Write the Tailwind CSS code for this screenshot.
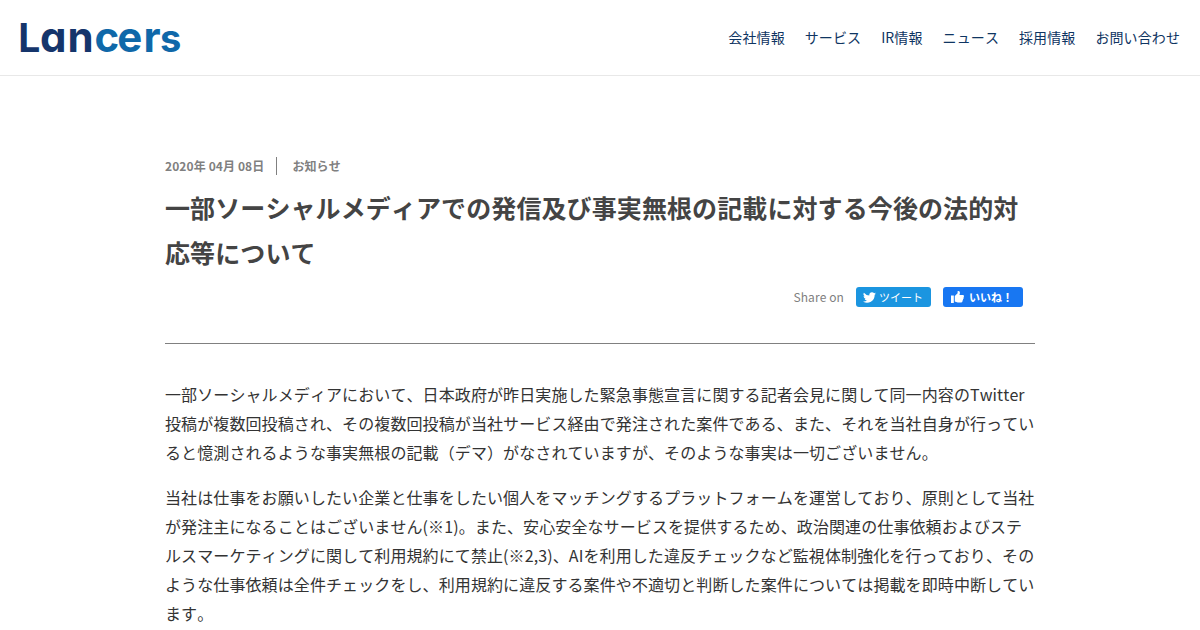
<!DOCTYPE html>
<html lang="ja">
<head>
  <meta charset="UTF-8">
  <title>ランサーズ株式会社</title>
  <meta name="viewport" content="width=device-width, initial-scale=1.0">
  <script src="https://cdn.jsdelivr.net/npm/@tailwindcss/browser@4"></script>
</head>
<body class="h-[630px] overflow-hidden bg-white font-['Noto_Sans_CJK_JP',sans-serif] tracking-[0.1px] text-[#333] [font-kerning:none]">

  <header class="flex h-[76px] items-center justify-between border-b border-[#e8e8e8] pr-5 pl-4">
    <a href="#" aria-label="Lancers">
      <svg class="block" width="172" height="74" viewBox="16 1 172 74">
        <text y="52" x="18.200 40 67.500 94.500 117.200 143.500 160" class="font-['Inter',sans-serif] text-[42px] font-bold tracking-normal [font-feature-settings:'cv11']"><tspan fill="#15356b"><tspan class="text-[39px]">L</tspan>an</tspan><tspan fill="#0f68a9">cer<tspan class="text-[38px]">s</tspan></tspan></text>
      </svg>
    </a>
    <nav class="flex gap-5 pb-0.5 text-sm text-[#0f3562]">
      <a href="#">会社情報</a>
      <a href="#">サービス</a>
      <a href="#">IR情報</a>
      <a href="#">ニュース</a>
      <a href="#">採用情報</a>
      <a href="#">お問い合わせ</a>
    </nav>
  </header>

  <main class="mx-auto w-[870px] pt-[81px]">
    <div class="flex h-[18px] items-center text-xs font-bold text-[#808080]">
      <time class="border-r border-[#808080] pr-3 leading-[18px]">2020年 04月 08日</time>
      <span class="pl-[15px]">お知らせ</span>
    </div>
    <h1 class="mt-[10px] text-[25px] leading-[45px] font-bold text-[#444]">一部ソーシャルメディアでの発信及び事実無根の記載に対する今後の法的対応等について</h1>

    <div class="mt-[12px] flex h-5 items-center justify-end pr-3">
      <span class="mr-3 text-xs tracking-[0.1px] text-[#808080]">Share on</span>
      <a href="#" class="mr-3 flex h-5 w-[75px] items-center rounded-[3px] bg-[#1b95e0] pl-[7px] text-[11px] tracking-normal text-white">
        <svg class="mr-[3px]" width="13" height="13" viewBox="0 0 24 24" fill="#fff"><path d="M24 4.6a10 10 0 0 1-2.8.8 5 5 0 0 0 2.1-2.7 10 10 0 0 1-3.1 1.2 4.9 4.9 0 0 0-8.4 4.5A14 14 0 0 1 1.700 3.100a4.900 4.900 0 0 0 1.500 6.600 4.900 4.900 0 0 1-2.200-.6 4.900 4.900 0 0 0 3.900 4.900 5 5 0 0 1-2.200.1 4.900 4.900 0 0 0 4.600 3.400A9.900 9.900 0 0 1 0 19.500 14 14 0 0 0 21.500 7.100 10 10 0 0 0 24 4.600z"/></svg>
        ツイート
      </a>
      <a href="#" class="flex h-5 w-20 items-center rounded-[3px] bg-[#1877f2] pl-2 text-[11px] font-bold tracking-normal text-white">
        <svg class="mr-[5px]" width="13" height="12" viewBox="0 0 13 12" fill="#fff"><path d="M0 4.500h2.800V12H0zM3.800 5 6.600 2.300V.3C6.800.1 7.100 0 7.400 0c1 0 1.500.8 1.500 1.800 0 .8-.2 1.600-.5 2.200h3.300c.7 0 1.300.5 1.300 1.200 0 .4-.2.8-.5 1 .2.2.2.500.2.800 0 .5-.3.900-.7 1.100l.1.500c0 .5-.3.900-.7 1.100l.1.400c0 .7-.5 1.300-1.200 1.300H6.800c-1.200 0-2.200-.3-3-.8z"/></svg>
        いいね！
      </a>
    </div>

    <hr class="mt-9 border-[#808080]">

    <div class="pt-9 text-base leading-[29px]">
      <p class="mb-4">一部ソーシャルメディアにおいて、日本政府が昨日実施した緊急事態宣言に関する記者会見に関して同一内容のTwitter投稿が複数回投稿され、その複数回投稿が当社サービス経由で発注された案件である、また、それを当社自身が行っていると憶測されるような事実無根の記載（デマ）がなされていますが、そのような事実は一切ございません。</p>
      <p>当社は仕事をお願いしたい企業と仕事をしたい個人をマッチングするプラットフォームを運営しており、原則として当社が発注主になることはございません(※1)。また、安心安全なサービスを提供するため、政治関連の仕事依頼およびステルスマーケティングに関して利用規約にて禁止(※2,3)、AIを利用した違反チェックなど監視体制強化を行っており、そのような仕事依頼は全件チェックをし、利用規約に違反する案件や不適切と判断した案件については掲載を即時中断しています。</p>
    </div>
  </main>

</body>
</html>
